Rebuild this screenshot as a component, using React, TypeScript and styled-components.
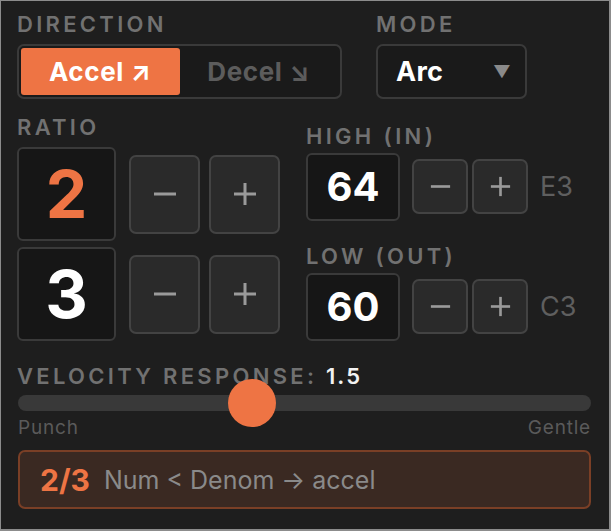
import styled, { createGlobalStyle } from 'styled-components';

const ORANGE = '#ee7444';

const GlobalStyle = createGlobalStyle`
	html, body {
		margin: 0;
		padding: 0;
		background: #1e1e1e;
	}
	* {
		box-sizing: border-box;
	}
`;

type Size = 'big' | 'small';

function StepIcon({ plus, size }: { plus?: boolean; size: Size }): JSX.Element {
	const px = size === 'big' ? 24 : 21;
	return (
		<svg width={px} height={px} viewBox="0 0 24 24" fill="none" stroke="#9a9a9a" strokeWidth={3}>
			<line x1="1" y1="12" x2="23" y2="12" />
			{plus && <line x1="12" y1="1" x2="12" y2="23" />}
		</svg>
	);
}

function Stepper({ size }: { size: Size }): JSX.Element {
	return (
		<StepGroup $size={size}>
			<StepButton $size={size}>
				<StepIcon size={size} />
			</StepButton>
			<StepButton $size={size}>
				<StepIcon size={size} plus />
			</StepButton>
		</StepGroup>
	);
}

export default function App(): JSX.Element {
	const velocity = 1.5;
	const fraction = (velocity - 0.5) / 2.5;

	return (
		<>
			<GlobalStyle />
			<Panel>
				<TopRow>
					<Field>
						<Label>Direction</Label>
						<Segmented>
							<Segment $active>Accel ↗</Segment>
							<Segment>Decel ↘</Segment>
						</Segmented>
					</Field>
					<Field>
						<Label>Mode</Label>
						<Select>
							<span>Arc</span>
							<Caret>▼</Caret>
						</Select>
					</Field>
				</TopRow>

				<MiddleRow>
					<RatioColumn>
						<Label>Ratio</Label>
						<RatioLine>
							<BigValue $accent>2</BigValue>
							<Stepper size="big" />
						</RatioLine>
						<RatioLine>
							<BigValue>3</BigValue>
							<Stepper size="big" />
						</RatioLine>
					</RatioColumn>

					<NoteColumn>
						<NoteField>
							<Label>High (in)</Label>
							<NoteLine>
								<SmallValue>64</SmallValue>
								<Stepper size="small" />
								<NoteName>E3</NoteName>
							</NoteLine>
						</NoteField>
						<NoteField>
							<Label>Low (out)</Label>
							<NoteLine>
								<SmallValue>60</SmallValue>
								<Stepper size="small" />
								<NoteName>C3</NoteName>
							</NoteLine>
						</NoteField>
					</NoteColumn>
				</MiddleRow>

				<VelocitySection>
					<Label>
						Velocity Response: <LabelValue>{velocity}</LabelValue>
					</Label>
					<Track>
						<Thumb style={{ left: `calc(24px + ${fraction} * (100% - 48px))` }} />
					</Track>
					<TrackEnds>
						<span>Punch</span>
						<span>Gentle</span>
					</TrackEnds>
				</VelocitySection>

				<Summary>
					<SummaryRatio>2/3</SummaryRatio>
					<SummaryText>Num &lt; Denom → accel</SummaryText>
				</Summary>
			</Panel>
		</>
	);
}

const Panel = styled.div`
	width: 611px;
	height: 531px;
	background: #1e1e1e;
	border-style: solid;
	border-color: #8c8c8c;
	border-width: 1px 2px 2px 1px;
	padding: 10px 16px 0 16px;
	font-family: Inter, 'Noto Sans', sans-serif;
	display: flex;
	flex-direction: column;
`;

const TopRow = styled.div`
	display: flex;
	gap: 34px;
`;

const Field = styled.div`
	display: flex;
	flex-direction: column;
	gap: 7px;
`;

const Label = styled.div`
	font-size: 22px;
	line-height: 26px;
	font-weight: 600;
	letter-spacing: 3.3px;
	text-transform: uppercase;
	color: #717171;
	white-space: nowrap;
`;

const LabelValue = styled.span`
	color: #f2f2f2;
	letter-spacing: 2px;
`;

const Segmented = styled.div`
	display: flex;
	width: 325px;
	height: 55px;
	padding: 2px;
	border: 2px solid #3a3a3a;
	border-radius: 7px;
	background: #1a1a1a;
`;

const Segment = styled.div<{ $active?: boolean }>`
	flex: 1;
	display: flex;
	align-items: center;
	justify-content: center;
	border-radius: 3px;
	font-size: 26px;
	font-weight: 700;
	letter-spacing: 0.6px;
	color: ${(p) => (p.$active ? '#ffffff' : '#5c5c5c')};
	background: ${(p) => (p.$active ? ORANGE : 'transparent')};
`;

const Select = styled.div`
	display: flex;
	align-items: center;
	justify-content: space-between;
	width: 151px;
	height: 55px;
	padding: 0 14px 0 18px;
	border: 2px solid #3a3a3a;
	border-radius: 7px;
	background: #1a1a1a;
	font-size: 27px;
	font-weight: 700;
	letter-spacing: 0.3px;
	color: #ffffff;
`;

const Caret = styled.span`
	font-size: 17px;
	color: #8a8a8a;
`;

const MiddleRow = styled.div`
	display: flex;
	align-items: center;
	gap: 26px;
	margin-top: 15px;
`;

const RatioColumn = styled.div`
	display: flex;
	flex-direction: column;
	gap: 6px;
	& > ${Label} {
		margin-bottom: 1px;
	}
`;

const RatioLine = styled.div`
	display: flex;
	align-items: center;
	gap: 13px;
`;

const ValueBox = styled.div`
	display: flex;
	align-items: center;
	justify-content: center;
	border: 2px solid #3a3a3a;
	border-radius: 6px;
	background: #161616;
	font-weight: 700;
	color: #ffffff;
`;

const BigValue = styled(ValueBox)<{ $accent?: boolean }>`
	width: 99px;
	height: 94px;
	font-size: 66px;
	color: ${(p) => (p.$accent ? ORANGE : '#ffffff')};
`;

const SmallValue = styled(ValueBox)`
	width: 94px;
	height: 68px;
	font-size: 40px;
`;

const StepGroup = styled.div<{ $size: Size }>`
	display: flex;
	gap: ${(p) => (p.$size === 'big' ? '9px' : '4px')};
`;

const StepButton = styled.div<{ $size: Size }>`
	display: flex;
	align-items: center;
	justify-content: center;
	width: ${(p) => (p.$size === 'big' ? '71px' : '56px')};
	height: ${(p) => (p.$size === 'big' ? '79px' : '55px')};
	border: 2px solid #434343;
	border-radius: 7px;
	background: #2a2a2a;
`;

const NoteColumn = styled.div`
	display: flex;
	flex-direction: column;
	gap: 22px;
	margin-top: 8px;
`;

const NoteField = styled.div`
	display: flex;
	flex-direction: column;
	gap: 4px;
`;

const NoteLine = styled.div`
	display: flex;
	align-items: center;
	gap: 12px;
`;

const NoteName = styled.span`
	font-size: 27px;
	color: #5f5f5f;
`;

const VelocitySection = styled.div`
	display: flex;
	flex-direction: column;
	margin-top: 22px;
`;

const Track = styled.div`
	position: relative;
	height: 16px;
	margin: 6px 2px 0 1px;
	border-radius: 8px;
	background: #393939;
`;

const Thumb = styled.div`
	position: absolute;
	top: 50%;
	width: 48px;
	height: 48px;
	border-radius: 50%;
	background: ${ORANGE};
	transform: translate(-50%, -50%);
`;

const TrackEnds = styled.div`
	display: flex;
	justify-content: space-between;
	margin: 5px 2px 0 1px;
	font-size: 19px;
	line-height: 24px;
	letter-spacing: 0.8px;
	color: #5a5a5a;
`;

const Summary = styled.div`
	display: flex;
	align-items: center;
	gap: 14px;
	height: 59px;
	margin: 10px 2px 0 1px;
	padding: 0 20px;
	border: 2px solid #7a3f26;
	border-radius: 7px;
	background: #3a2922;
`;

const SummaryRatio = styled.span`
	font-size: 30px;
	font-weight: 700;
	color: ${ORANGE};
`;

const SummaryText = styled.span`
	font-size: 25px;
	color: #8a8a8a;
`;
